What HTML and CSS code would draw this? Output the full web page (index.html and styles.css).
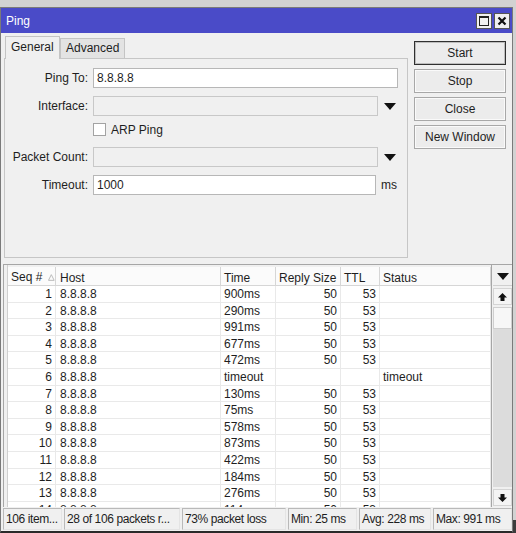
FILE: index.html
```html
<!DOCTYPE html>
<html lang="en">
<head>
    <meta charset="UTF-8">
    <title>Ping</title>
    <link rel="stylesheet" href="styles.css">
</head>
<body>
<div class="desk">
    <div class="window">
        <div class="titlebar">
            <span class="title">Ping</span>
            <div class="tb-btns">
                <span class="tb-btn"><span class="max-box"></span></span>
                <span class="tb-btn">
                    <svg width="10" height="10" viewBox="0 0 10 10"><path d="M1.5 1.5 L8.5 8.5 M8.5 1.5 L1.5 8.5" stroke="#111" stroke-width="2.2"/></svg>
                </span>
            </div>
        </div>

        <div class="top">
            <div class="left">
                <div class="tabs">
                    <div class="tab active">General</div>
                    <div class="tab">Advanced</div>
                </div>
                <div class="panel">
                    <div class="form-row">
                        <label class="lbl">Ping To:</label>
                        <div class="field wide">8.8.8.8</div>
                    </div>
                    <div class="form-row">
                        <label class="lbl">Interface:</label>
                        <div class="field disabled"></div>
                        <svg class="drop" width="12" height="7" viewBox="0 0 12 7"><polygon points="0,0 12,0 6,7" fill="#111"/></svg>
                    </div>
                    <div class="check-row">
                        <span class="checkbox"></span>
                        <span>ARP Ping</span>
                    </div>
                    <div class="form-row">
                        <label class="lbl">Packet Count:</label>
                        <div class="field disabled"></div>
                        <svg class="drop" width="12" height="7" viewBox="0 0 12 7"><polygon points="0,0 12,0 6,7" fill="#111"/></svg>
                    </div>
                    <div class="form-row">
                        <label class="lbl">Timeout:</label>
                        <div class="field short">1000</div>
                        <span class="unit">ms</span>
                    </div>
                </div>
            </div>
            <div class="actions">
                <div class="btn default">Start</div>
                <div class="btn">Stop</div>
                <div class="btn">Close</div>
                <div class="btn">New Window</div>
            </div>
        </div>

        <div class="list">
            <div class="gutter"></div>
            <div class="table">
                <div class="row head">
                    <div class="c seq-h">Seq #<svg class="sort" width="7" height="7" viewBox="0 0 7 7"><polygon points="3.5,0.5 6.5,6.5 0.5,6.5" fill="none" stroke="#b8b8b8"/></svg></div>
                    <div class="c">Host</div>
                    <div class="c">Time</div>
                    <div class="c">Reply Size</div>
                    <div class="c">TTL</div>
                    <div class="c">Status</div>
                </div>
                <div class="body">
                    <div class="row"><div class="c num">1</div><div class="c">8.8.8.8</div><div class="c">900ms</div><div class="c num">50</div><div class="c num">53</div><div class="c"></div></div>
                    <div class="row"><div class="c num">2</div><div class="c">8.8.8.8</div><div class="c">290ms</div><div class="c num">50</div><div class="c num">53</div><div class="c"></div></div>
                    <div class="row"><div class="c num">3</div><div class="c">8.8.8.8</div><div class="c">991ms</div><div class="c num">50</div><div class="c num">53</div><div class="c"></div></div>
                    <div class="row"><div class="c num">4</div><div class="c">8.8.8.8</div><div class="c">677ms</div><div class="c num">50</div><div class="c num">53</div><div class="c"></div></div>
                    <div class="row"><div class="c num">5</div><div class="c">8.8.8.8</div><div class="c">472ms</div><div class="c num">50</div><div class="c num">53</div><div class="c"></div></div>
                    <div class="row"><div class="c num">6</div><div class="c">8.8.8.8</div><div class="c">timeout</div><div class="c num"></div><div class="c num"></div><div class="c">timeout</div></div>
                    <div class="row"><div class="c num">7</div><div class="c">8.8.8.8</div><div class="c">130ms</div><div class="c num">50</div><div class="c num">53</div><div class="c"></div></div>
                    <div class="row"><div class="c num">8</div><div class="c">8.8.8.8</div><div class="c">75ms</div><div class="c num">50</div><div class="c num">53</div><div class="c"></div></div>
                    <div class="row"><div class="c num">9</div><div class="c">8.8.8.8</div><div class="c">578ms</div><div class="c num">50</div><div class="c num">53</div><div class="c"></div></div>
                    <div class="row"><div class="c num">10</div><div class="c">8.8.8.8</div><div class="c">873ms</div><div class="c num">50</div><div class="c num">53</div><div class="c"></div></div>
                    <div class="row"><div class="c num">11</div><div class="c">8.8.8.8</div><div class="c">422ms</div><div class="c num">50</div><div class="c num">53</div><div class="c"></div></div>
                    <div class="row"><div class="c num">12</div><div class="c">8.8.8.8</div><div class="c">184ms</div><div class="c num">50</div><div class="c num">53</div><div class="c"></div></div>
                    <div class="row"><div class="c num">13</div><div class="c">8.8.8.8</div><div class="c">276ms</div><div class="c num">50</div><div class="c num">53</div><div class="c"></div></div>
                    <div class="row"><div class="c num">14</div><div class="c">8.8.8.8</div><div class="c">114ms</div><div class="c num">50</div><div class="c num">53</div><div class="c"></div></div>
                </div>
            </div>
            <div class="scroll">
                <div class="col-menu">
                    <svg width="12" height="7" viewBox="0 0 12 7"><polygon points="0,0 12,0 6,7" fill="#111"/></svg>
                </div>
                <div class="sb-btn">
                    <svg width="9" height="8" viewBox="0 0 9 8"><polygon points="4.5,0 9,4.5 6.5,4.5 6.5,8 2.5,8 2.5,4.5 0,4.5" fill="#111"/></svg>
                </div>
                <div class="thumb"></div>
                <div class="track"></div>
                <div class="sb-btn">
                    <svg width="9" height="8" viewBox="0 0 9 8"><polygon points="4.5,8 9,3.5 6.5,3.5 6.5,0 2.5,0 2.5,3.5 0,3.5" fill="#111"/></svg>
                </div>
            </div>
        </div>

        <div class="statusbar">
            <div class="seg s1">106 item...</div>
            <div class="seg s2">28 of 106 packets r...</div>
            <div class="seg s3">73% packet loss</div>
            <div class="seg s4">Min: 25 ms</div>
            <div class="seg s5">Avg: 228 ms</div>
            <div class="seg s6">Max: 991 ms</div>
        </div>
    </div>
</div>
</body>
</html>
```

FILE: styles.css
```css
* {
    margin: 0;
    padding: 0;
    box-sizing: border-box;
}

body {
    font-family: 'Liberation Sans', Arial, sans-serif;
    font-size: 12px;
    color: #1e1e1e;
    background: #3c3c3c;
}

.desk {
    width: 516px;
    height: 533px;
    padding-top: 7px;
    background: linear-gradient(#d2d2d2 0, #d2d2d2 520px, #3c3c3c 520px);
    overflow: hidden;
}

.window {
    width: 513px;
    height: 526px;
    border: 1px solid #7a7a7a;
    border-bottom-width: 2px;
    border-bottom-color: #2a2a2a;
    background: #f0f0f0;
    display: flex;
    flex-direction: column;
}

/* title bar */
.titlebar {
    height: 25px;
    background: #4a4bc8;
    display: flex;
    align-items: center;
    justify-content: space-between;
    padding: 1px 2px 0 5px;
    flex-shrink: 0;
}

.title {
    color: #fff;
}

.tb-btns {
    display: flex;
    gap: 2px;
}

.tb-btn {
    width: 16px;
    height: 16px;
    background: #f0f0f0;
    border: 1px solid #555;
    display: flex;
    align-items: center;
    justify-content: center;
}

.max-box {
    width: 10px;
    height: 10px;
    border: 1px solid #222;
    border-top-width: 2px;
}

/* top part */
.top {
    height: 231px;
    display: flex;
    padding: 3px 0 0 3px;
    flex-shrink: 0;
}

.left {
    width: 404px;
}

.tabs {
    display: flex;
    align-items: flex-end;
    height: 22px;
    padding-left: 1px;
    position: relative;
    z-index: 1;
}

.tab {
    height: 20px;
    padding: 0 5px;
    line-height: 18px;
    border: 1px solid #c4c4c4;
    border-bottom: none;
    background: #e3e3e3;
}

.tab.active {
    height: 23px;
    width: 55px;
    background: #f0f0f0;
    line-height: 20px;
    padding-left: 5px;
    margin-bottom: -1px;
}

.panel {
    height: 200px;
    border: 1px solid #c6c6c6;
    padding-top: 9px;
}

.form-row {
    display: flex;
    align-items: center;
    height: 20px;
    margin-bottom: 8px;
}

.lbl {
    width: 83px;
    margin-right: 5px;
    text-align: right;
}

.field {
    height: 20px;
    width: 285px;
    border: 1px solid #b7b7b7;
    background: #fff;
    padding-left: 3px;
    line-height: 18px;
}

.field.wide {
    width: 305px;
}

.field.short {
    width: 283px;
}

.field.disabled {
    background: #f0f0f0;
    border-color: #c8c8c8;
}

.drop {
    margin-left: 6px;
}

.unit {
    margin-left: 5px;
}

.check-row {
    display: flex;
    align-items: center;
    height: 15px;
    margin: -2px 0 10px 88px;
}

.checkbox {
    width: 13px;
    height: 13px;
    border: 1px solid #a3a3a3;
    background: #fff;
    margin-right: 5px;
}

.actions {
    margin-left: 6px;
    padding-top: 5px;
    display: flex;
    flex-direction: column;
    gap: 4px;
}

.btn {
    width: 92px;
    height: 24px;
    border: 1px solid #a8a8a8;
    box-shadow: inset 0 0 0 1px #fafafa;
    background: #ececec;
    text-align: center;
    line-height: 22px;
}

.btn.default {
    border-color: #303030;
    box-shadow: inset 0 0 0 1px #bdbdbd;
}

/* list */
.list {
    height: 243px;
    margin-left: 2px;
    border-left: 1px solid #a6a6a6;
    border-top: 1px solid #a6a6a6;
    display: flex;
    flex-shrink: 0;
}

.gutter {
    width: 4px;
    border-right: 1px solid #cfcfcf;
}

.table {
    width: 483px;
    padding-top: 2px;
    display: flex;
    flex-direction: column;
}

.row {
    display: grid;
    grid-template-columns: 48px 165px 55px 65px 39px 111px;
    height: 16.6px;
    line-height: 16px;
}

.row .c {
    border-right: 1px solid #e9e9e9;
    border-bottom: 1px solid #e9e9e9;
    padding-left: 3px;
    white-space: nowrap;
    overflow: hidden;
}

.row .c:nth-child(2) {
    padding-left: 4px;
}

.row .c.num {
    text-align: right;
    padding: 0 3px 0 0;
}

.row.head {
    height: 19px;
    line-height: 19px;
    background: #fbfbfb;
}

.row.head .c {
    padding-top: 2px;
    border-right-color: #d6d6d6;
    border-bottom-color: #d6d6d6;
}

.seq-h {
    display: flex;
    align-items: center;
}

.sort {
    margin-left: 6px;
}

.body {
    flex: 1;
    background: #fff;
    overflow: hidden;
}

.scroll {
    width: 21px;
    border-left: 1px solid #a6a6a6;
    display: flex;
    flex-direction: column;
    padding: 2px 0 1px 1px;
}

.col-menu {
    height: 19px;
    display: flex;
    align-items: center;
    justify-content: center;
    border-bottom: 1px solid #cfcfcf;
}

.sb-btn {
    height: 17px;
    margin-top: 2px;
    background: #f4f4f4;
    border: 1px solid #d4d4d4;
    display: flex;
    align-items: center;
    justify-content: center;
}

.thumb {
    height: 22px;
    margin-top: 2px;
    background: #f7f7f7;
    border: 1px solid #cfcfcf;
}

.track {
    flex: 1;
    background: #dcdcdc;
}

/* status bar */
.statusbar {
    height: 24px;
    display: flex;
    gap: 2px;
    padding: 1px 0 1px 2px;
    flex-shrink: 0;
}

.seg {
    height: 22px;
    border: 1px solid #b9b9b9;
    border-right-color: #e4e4e4;
    border-bottom-color: #e4e4e4;
    padding-left: 2px;
    line-height: 20px;
    letter-spacing: -0.4px;
    white-space: nowrap;
    overflow: hidden;
}

.s1 { width: 59px; }
.s2 { width: 116px; }
.s3 { width: 104px; }
.s4 { width: 69px; }
.s5 { width: 72px; }
.s6 { width: 79px; }
```
